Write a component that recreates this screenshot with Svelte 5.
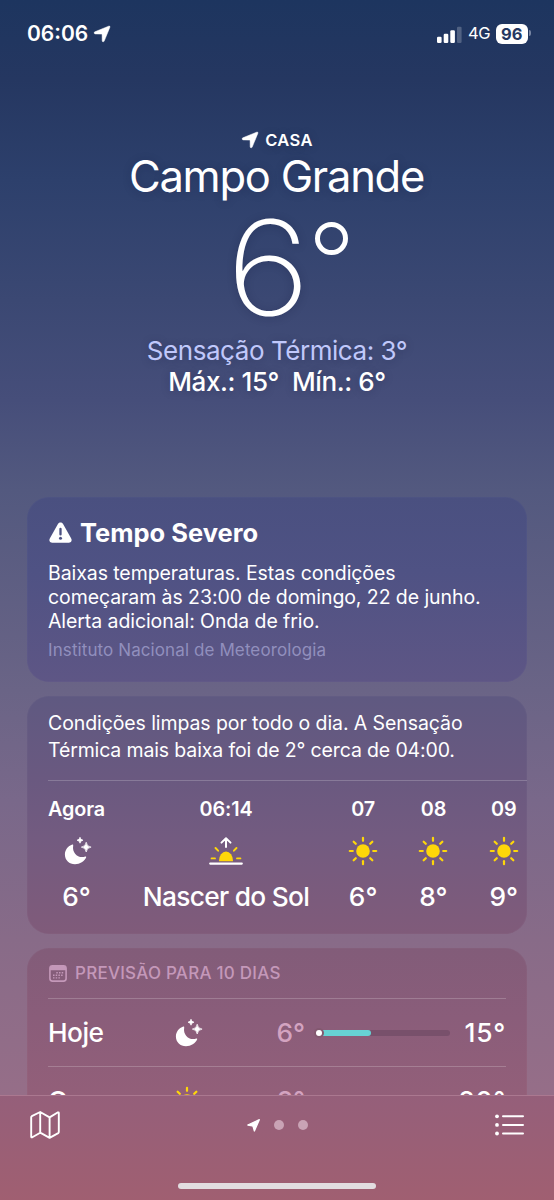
<script>
  const hours = [
    { label: 'Agora', icon: 'moon', value: '6°', cls: 'now' },
    { label: '06:14', icon: 'sunrise', value: 'Nascer do Sol', cls: 'rise' },
    { label: '07', icon: 'sun', value: '6°', cls: 'hour' },
    { label: '08', icon: 'sun', value: '8°', cls: 'hour' },
    { label: '09', icon: 'sun', value: '9°', cls: 'hour' }
  ];
  const days = [
    { name: 'Hoje', icon: 'moon', min: '6°', max: '15°', from: 0, to: 41, now: true },
    { name: 'Qua.', icon: 'sun', min: '8°', max: '20°', from: 12, to: 70, now: false }
  ];
  const angles = [0, 45, 90, 135, 180, 225, 270, 315];
</script>

{#snippet arrow(cls)}
  <svg class={cls} viewBox="0 0 16 16">
    <path d="M14.600 0.200C15.600-.2 16.200.4 15.800 1.400L10.200 15.100C9.700 16.200 8.200 16 8.200 14.800L8.100 8.700Q8.100 8.100 7.500 8.100L1.200 7.900C-.1 7.800-.3 6.300.9 5.800Z" fill="#fff" stroke="#fff" stroke-width=".5" />
  </svg>
{/snippet}

{#snippet weather(kind)}
  {#if kind === 'moon'}
    <svg class="moon" viewBox="0 0 28 28">
      <path d="M8.300 7.500C4 8.900.9 12.800.9 17.500C.9 23.100 5.300 27.300 11 27.300C15.800 27.300 20.600 24.400 22.200 20.300C22.400 19.500 21.900 19.300 21.300 19.500C14.500 21.900 7.800 16.300 9.200 8.400C9.300 7.700 9 7.300 8.300 7.500Z" fill="#fff" />
      <path d="M16 0.200Q16.300 2.900 19 3.200Q16.300 3.500 16 6.200Q15.700 3.500 13 3.200Q15.700 2.900 16 .2ZM22.200 5.200Q22.700 9.600 27.100 10.100Q22.700 10.600 22.200 15Q21.700 10.600 17.300 10.100Q21.700 9.600 22.200 5.200Z" fill="#fff" stroke="#fff" stroke-width=".7" stroke-linejoin="round" />
    </svg>
  {:else if kind === 'sunrise'}
    <svg class="sunrise" viewBox="0 0 34 28">
      <path d="M17 10V1.400M12.500 5.600L17 1.200L21.500 5.600" fill="none" stroke="#fff" stroke-width="2" stroke-linecap="round" stroke-linejoin="round" />
      <path d="M9.900 24.300A7.100 9.800 0 0 1 24.100 24.300Z" fill="#fed709" />
      <path d="M2.600 21.400H6M28 21.400H31.400M6.500 11L9.100 13.700M27.500 11L24.900 13.700" stroke="#fed709" stroke-width="1.900" stroke-linecap="round" />
      <path d="M1.200 26.600H32.800" stroke="#fff" stroke-width="2.200" stroke-linecap="round" />
    </svg>
  {:else}
    <svg class="sun" viewBox="-15 -15 30 30">
      <circle r="6.800" fill="#fed709" />
      {#each angles as a}
        <path d="M0-10.200V-13.200" transform="rotate({a})" stroke="#fed709" stroke-width="2.200" stroke-linecap="round" />
      {/each}
    </svg>
  {/if}
{/snippet}

<div class="screen">
  <div class="scroll">
    <header class="status">
      <span class="clock">06:06</span>
      {@render arrow('loc')}
      <svg class="signal" viewBox="0 0 25 17">
        <rect x="0" y="10.700" width="4.600" height="6.300" rx="1.200" fill="#fff" />
        <rect x="6.700" y="7.700" width="4.600" height="9.300" rx="1.200" fill="#fff" />
        <rect x="13.300" y="4.200" width="4.600" height="12.800" rx="1.200" fill="#fff" />
        <rect x="20" y="0.800" width="4.600" height="16.200" rx="1.200" fill="#fff" opacity=".22" />
      </svg>
      <span class="net">4G</span>
      <span class="battery">96</span>
      <i class="cap"></i>
    </header>

    <section class="hero">
      <div class="home">{@render arrow('pin')}<span>CASA</span></div>
      <h1>Campo Grande</h1>
      <div class="temp"><span>6</span><i></i></div>
      <div class="feels">Sensação Térmica: 3°</div>
      <div class="range"><span>Máx.: 15°</span><span>Mín.: 6°</span></div>
    </section>

    <section class="card alert">
      <h2>
        <svg viewBox="0 0 23 21">
          <path d="M9.100 1.800C10.200 0 12.800 0 13.900 1.800L22.200 16.500C23.300 18.500 22.100 20.700 19.900 20.700H3.100C.9 20.700-.3 18.500.8 16.500Z" fill="#fff" />
          <path d="M11.500 7V12.400" stroke="#4b5082" stroke-width="2.300" stroke-linecap="round" />
          <circle cx="11.500" cy="16.200" r="1.500" fill="#4b5082" />
        </svg>
        <span>Tempo Severo</span>
      </h2>
      <p>Baixas temperaturas. Estas condições<br />começaram às 23:00 de domingo, 22 de junho.<br />Alerta adicional: Onda de frio.</p>
      <small>Instituto Nacional de Meteorologia</small>
    </section>

    <section class="card hourly">
      <p>Condições limpas por todo o dia. A Sensação<br /><span class="tight">Térmica mais baixa foi de 2° cerca de 04:00.</span></p>
      <div class="hours">
        {#each hours as h}
          <div class="col {h.cls}">
            <b>{h.label}</b>
            <div class="ico">{@render weather(h.icon)}</div>
            <span>{h.value}</span>
          </div>
        {/each}
      </div>
    </section>

    <section class="card daily">
      <h3>
        <svg viewBox="0 0 18 17">
          <rect x=".9" y=".9" width="16.200" height="15.200" rx="2.600" fill="none" stroke="currentColor" stroke-width="1.600" />
          <path d="M1 5.200V3Q1 1 3 1H15Q17 1 17 3V5.200Z" fill="currentColor" />
          <path d="M7.300 7.700H14.600M4 10.300H14.600M4 12.900H11.500" stroke="currentColor" stroke-width="1.400" stroke-dasharray="1.500 1.200" />
        </svg>
        <span>PREVISÃO PARA 10 DIAS</span>
      </h3>
      {#each days as d}
        <div class="day">
          <span class="name">{d.name}</span>
          <div class="dico">{@render weather(d.icon)}</div>
          <span class="min">{d.min}</span>
          <div class="track">
            <i class="fill" style="left:{d.from}%;width:{d.to - d.from}%"></i>
            {#if d.now}<i class="dot"></i>{/if}
          </div>
          <span class="max">{d.max}</span>
        </div>
      {/each}
    </section>
  </div>

  <nav>
    <div class="tools">
      <svg class="map" viewBox="0 0 30 28">
        <path d="M1.200 6.300Q1.200 5.600 1.800 5.200L10.200 1L19.600 6.400L27.600 1.500Q28.800 1 28.800 2.200V21Q28.800 21.700 28.200 22.100L19.600 26.800L10.200 21.700L2.300 26.300Q1.200 26.700 1.200 25.600ZM10.200 1V21.700M19.600 6.400V26.800" fill="none" stroke="#fff" stroke-width="1.900" stroke-linejoin="round" />
      </svg>
      <div class="pages">
        <svg class="page" viewBox="0 0 13 13">
          <path d="M12.300 0.700L7.400 12L6.100 7.600Q5.900 7 5.300 6.900L0.800 6Z" fill="#fff" stroke="#fff" stroke-width="1.300" stroke-linejoin="round" />
        </svg>
        <i></i><i></i>
      </div>
      <svg class="list" viewBox="0 0 29 22">
        <path d="M8 2.300H28M8 10.900H28M8 19.500H28" stroke="#fff" stroke-width="2" stroke-linecap="round" />
        <circle cx="2" cy="2.300" r="1.900" fill="#fff" /><circle cx="2" cy="10.900" r="1.900" fill="#fff" /><circle cx="2" cy="19.500" r="1.900" fill="#fff" />
      </svg>
    </div>
    <div class="grip"></div>
  </nav>
</div>

<style>
  .screen {
    width: 554px;
    height: 1200px;
    overflow: hidden;
    display: flex;
    flex-direction: column;
    font-family: Inter, 'Liberation Sans', sans-serif;
    color: #fff;
    background: linear-gradient(#1d355f 0, #253761 80px, #2d406c 180px, #3b4873 300px, #464e7a 400px, #53597f 490px, #6a6486 690px, #79688a 800px, #886b88 940px, #966e88 1096px);
  }
  .screen * { box-sizing: border-box; }
  svg { display: block; flex: none; overflow: visible; }
  span, b, h1, small, .feels { white-space: nowrap; }
  .scroll { height: 1095px; overflow: hidden; flex: none; }

  .status { display: flex; align-items: center; height: 66px; padding-left: 27px; }
  .clock { width: 67px; font-size: 21px; font-weight: 600; letter-spacing: 0; }
  .loc { width: 16px; height: 16px; margin-top: 1px; }
  .signal { width: 25px; height: 17px; margin: 2px 0 0 327px; }
  .net { width: 28px; margin-left: 6px; font-size: 16.500px; letter-spacing: -0.5px; }
  .battery { width: 31.500px; height: 20px; margin-top: 1px; border-radius: 6px; background: #fff; color: #253761; font-size: 16.500px; line-height: 20px; font-weight: 700; text-align: center; }
  .cap { width: 2px; height: 6px; margin-left: 1px; border-radius: 0 2px 2px 0; background: #7785a3; }

  .hero { display: flex; flex-direction: column; align-items: center; height: 431px; padding-top: 63px; text-shadow: 0 1px 8px rgba(20, 25, 60, 0.25); }
  .home { display: flex; align-items: center; gap: 7px; height: 22px; padding-left: 1px; font-size: 16.500px; font-weight: 600; letter-spacing: 0.400px; }
  .pin { width: 16px; height: 16px; }
  h1 { margin: 0; height: 52px; line-height: 51px; font-size: 43.500px; font-weight: 400; letter-spacing: -1.250px; padding-right: 1px; }
  .temp { display: flex; height: 132px; padding-left: 24px; }
  .temp span { font-size: 131px; line-height: 129px; font-weight: 220; transform: scaleX(1.1); }
  .temp i { width: 33px; height: 33px; margin: 19px 0 0 8px; border: 5px solid #fff; border-radius: 50%; }
  .feels { height: 31px; line-height: 31px; font-size: 26px; letter-spacing: -0.450px; color: #c0c8fb; }
  .range { display: flex; gap: 13px; height: 31px; line-height: 31px; font-size: 26px; font-weight: 500; letter-spacing: -0.400px; }

  .card { width: 500px; margin: 0 auto 14px 27px; border-radius: 22px; overflow: hidden; box-shadow: inset 0 0 0 1px rgba(255, 255, 255, 0.02); }
  .card p { margin: 0; }
  .alert { height: 185px; padding: 20px 21px 0; background: linear-gradient(#4a5080, #4f5284 40%, #5e5685); }
  h2 { display: flex; align-items: center; gap: 8px; height: 30px; margin: 0; padding-left: 1px; font-size: 25.500px; font-weight: 700; letter-spacing: 0; }
  h2 svg { width: 23px; height: 21px; }
  .alert p { margin-top: 14px; font-size: 19.500px; line-height: 24px; letter-spacing: -0.080px; }
  small { display: block; margin-top: 6px; line-height: 22px; font-size: 17px; letter-spacing: 0.100px; color: #918fbd; }

  .hourly { height: 238px; padding: 14px 0 0 21px; background: linear-gradient(#5f5981, #6a5980 35%, #735b80 60%, #805b7a); }
  .hourly p { height: 71px; line-height: 27px; font-size: 19.500px; letter-spacing: -0.090px; border-bottom: 1px solid rgba(255, 255, 255, 0.2); }
  .tight { letter-spacing: -0.140px; }
  .hours { display: flex; margin-top: 16px; }
  .col { display: flex; flex-direction: column; align-items: center; flex: none; width: 70.300px; }
  .now { width: 57px; }
  .rise { width: 242px; margin-right: -19px; }
  .col b { height: 24px; line-height: 24px; font-size: 19.800px; font-weight: 600; letter-spacing: -0.100px; }
  .ico { display: flex; align-items: center; height: 59px; }
  .now .ico { padding-left: 3px; }
  .col span { height: 34px; line-height: 34px; font-size: 26.300px; font-weight: 500; }
  .rise span { letter-spacing: -0.700px; }
  .moon { width: 28px; height: 28px; }
  .sun { width: 30px; height: 30px; }
  .sunrise { width: 34px; height: 28px; }

  .daily { height: 250px; margin-bottom: 0; padding: 0 21px; background: linear-gradient(#825c79, #8a5d7a 28%, #935f79 60%); }
  h3 { display: flex; align-items: center; gap: 8px; height: 50px; margin: 0; padding-left: 1px; font-size: 17px; font-weight: 500; letter-spacing: 0.250px; color: #c498b9; }
  h3 svg { width: 18px; height: 17px; }
  .day { display: flex; align-items: center; height: 68px; border-top: 1px solid rgba(255, 255, 255, 0.2); font-size: 26.300px; font-weight: 500; }
  .name { width: 124px; letter-spacing: -0.500px; }
  .dico { display: flex; justify-content: center; width: 30px; }
  .dico .moon { margin-left: 3px; }
  .min { width: 103px; text-align: right; color: #d3a3c0; }
  .track { position: relative; width: 134px; height: 6px; margin-left: 11px; border-radius: 3px; background: #78506b; }
  .fill { position: absolute; top: 0; height: 6px; border-radius: 3px; background: #67d2d4; }
  .dot { position: absolute; left: 0; top: 0; width: 6px; height: 6px; border-radius: 50%; background: #fff; box-shadow: 0 0 0 2px #835970; }
  .max { flex: 1; text-align: right; letter-spacing: 0.800px; }

  nav { height: 105px; border-top: 1px solid #ab7890; background: linear-gradient(#955f7a, #9a5f76 45%, #a05f71); }
  .tools { display: flex; align-items: center; justify-content: space-between; height: 58px; padding: 0 30px; }
  .map { width: 30px; height: 28px; }
  .pages { display: flex; align-items: center; gap: 14px; }
  .pages i { width: 10px; height: 10px; border-radius: 50%; background: #c9a3b5; }
  .page { width: 13px; height: 13px; }
  .list { width: 29px; height: 22px; }
  .grip { width: 198px; height: 6px; margin: 29px auto 0; border-radius: 3px; background: #e2dde0; }
</style>
